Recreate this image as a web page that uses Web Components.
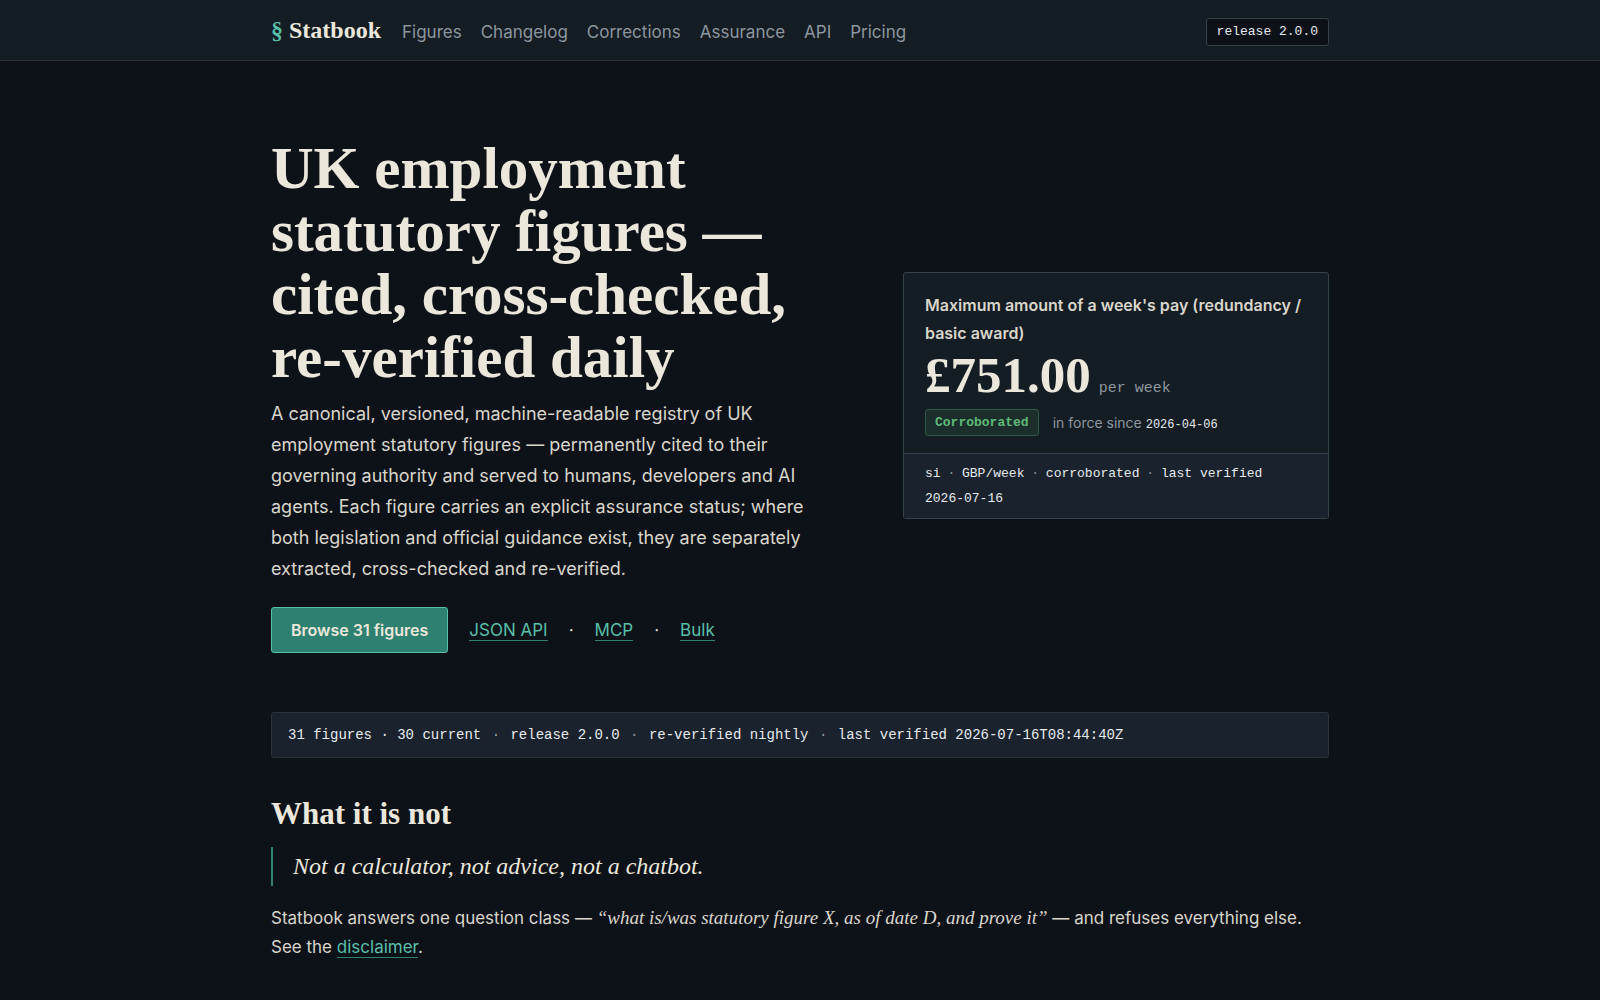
<!DOCTYPE html>
<html lang="en">
<head>
<meta charset="utf-8">
<meta name="viewport" content="width=device-width, initial-scale=1">
<title>Statbook</title>
<style>
:root {
  --bg: #0d1219; --panel: #141c24; --raised: #1a232d; --line: #28333b; --line-strong: #36424a;
  --ink: #ece7db; --body: #d9d6cb; --mono-ink: #e6eaee; --muted: #8d979f;
  --accent: #58bfa8; --accent-fill: #2e8070; --ok: #5fba77;
  --serif: "Liberation Serif", serif; --sans: Inter, sans-serif; --mono: "Liberation Mono", monospace;
}
body { margin: 0; background: var(--bg); color: var(--body); font: 17px/29px var(--sans); }
</style>
</head>
<body>
<sb-header></sb-header>
<sb-page>
  <sb-hero>
    <sb-figure-card slot="card" name="Maximum amount of a week's pay (redundancy / basic award)" value="£751.00" unit="per week" status="Corroborated" since="2026-04-06"></sb-figure-card>
  </sb-hero>
  <sb-stats></sb-stats>
  <sb-scope></sb-scope>
</sb-page>
<script>
const define = (name, html) => customElements.define(name, class extends HTMLElement {
  constructor() {
    super();
    this.attachShadow({ mode: "open" }).innerHTML = html;
  }
  connectedCallback() {
    for (const el of this.shadowRoot.querySelectorAll("[data-attr]"))
      el.textContent = this.getAttribute(el.dataset.attr);
  }
});

define("sb-link", `
<style>
:host { display: inline; }
a { color: var(--accent); text-decoration: none; border-bottom: 1px solid var(--accent-fill); }
</style><a href="#"><slot></slot></a>`);

define("sb-header", `
<style>
:host { display: block; background: var(--panel); border-bottom: 1px solid var(--line); }
.bar { max-width: 1058px; margin: 0 auto; padding: 16px 0 12px; display: flex; align-items: center; gap: 21px; }
a { text-decoration: none; color: var(--muted); }
.brand { font: bold 24px/32px var(--serif); color: var(--ink); padding-bottom: 2px; margin-top: -2px; }
.brand span { color: var(--accent); }
nav { display: flex; gap: 19px; font-size: 17px; line-height: 30px; }
.release { margin-left: auto; padding: 0 10px; font: 13px/26px var(--mono); color: var(--mono-ink);
  background: #0b1117; border: 1px solid var(--line-strong); border-radius: 3px; }
</style>
<header class="bar">
  <a class="brand" href="#"><span>§</span> Statbook</a>
  <nav><a href="#">Figures</a><a href="#">Changelog</a><a href="#">Corrections</a><a href="#">Assurance</a><a href="#">API</a><a href="#">Pricing</a></nav>
  <span class="release">release 2.0.0</span>
</header>`);

define("sb-page", `
<style>:host { display: block; max-width: 1058px; margin: 0 auto; padding: 76px 0 40px; }</style>
<slot></slot>`);

define("sb-hero", `
<style>
:host { display: grid; grid-template-columns: 4fr 3fr; gap: 64px; align-items: center; }
h1 { margin: 0 0 9px; font: bold 59px/63px var(--serif); color: var(--ink); }
p { margin: 0 0 23px; font-size: 18px; line-height: 31px; max-width: 552px; }
.actions { display: flex; align-items: center; gap: 21px; font-size: 17px; }
button { font: 600 16px/26px var(--sans); color: var(--ink); background: var(--accent-fill);
  border: 1px solid var(--accent); border-radius: 3px; padding: 9px 19px; margin: 0; }
</style>
<div>
  <h1>UK employment statutory figures — cited, cross-checked, re-verified daily</h1>
  <p>A canonical, versioned, machine-readable registry of UK employment statutory figures — permanently cited to their governing authority and served to humans, developers and AI agents. Each figure carries an explicit assurance status; where both legislation and official guidance exist, they are separately extracted, cross-checked and re-verified.</p>
  <div class="actions">
    <button type="button">Browse 31 figures</button>
    <sb-link>JSON API</sb-link><span>·</span><sb-link>MCP</sb-link><span>·</span><sb-link>Bulk</sb-link>
  </div>
</div>
<slot name="card"></slot>`);

define("sb-figure-card", `
<style>
:host { display: block; background: var(--panel); border: 1px solid var(--line-strong); border-radius: 3px; }
.main { padding: 18px 21px 16px; }
h2 { margin: 0; font: 600 16px/28px var(--sans); }
.value { display: flex; align-items: baseline; gap: 8px; margin: 1px 0 7px; }
.value strong { font: bold 51px/54px var(--serif); color: var(--ink); }
.value span { font: 15px/26px var(--mono); color: var(--muted); }
.status { display: flex; align-items: center; gap: 14px; font-size: 14px; line-height: 27px; color: var(--muted); }
.badge { font: bold 13px/25px var(--mono); color: var(--ok); background: #1b2e2c; border: 1px solid #2e5a46;
  border-radius: 3px; padding: 0 9px; }
time { font: 12px/24px var(--mono); color: var(--mono-ink); }
footer { border-top: 1px solid var(--line-strong); background: var(--raised); color: var(--mono-ink);
  padding: 7px 21px; font: 13px/25px var(--mono); }
i { font-style: normal; color: var(--muted); margin: 0 -1px; }
</style>
<div class="main">
  <h2 data-attr="name"></h2>
  <div class="value"><strong data-attr="value"></strong><span data-attr="unit"></span></div>
  <div class="status"><span class="badge" data-attr="status"></span><span>in force since <time data-attr="since"></time></span></div>
</div>
<footer>si <i>·</i> GBP/week <i>·</i> corroborated <i>·</i> last verified 2026-07-16</footer>`);

define("sb-stats", `
<style>
:host { display: block; margin-top: 59px; padding: 9px 16px; background: var(--raised); color: var(--mono-ink);
  border: 1px solid var(--line); border-radius: 3px; font: 14px/26px var(--mono); }
i { font-style: normal; color: var(--muted); margin: 0 2px; }
</style>31 figures · 30 current <i>·</i> release 2.0.0 <i>·</i> re-verified nightly <i>·</i> last verified 2026-07-16T08:44:40Z`);

define("sb-scope", `
<style>
:host { display: block; }
h2 { margin: 38px 0 15px; font: bold 31px/36px var(--serif); color: var(--ink); }
blockquote { margin: 0 0 18px; padding: 0 20px; border-left: 2px solid var(--accent-fill);
  font: italic 24px/39px var(--serif); color: var(--ink); }
p { margin: 0; }
em { font: italic 19px/26px var(--serif); }
</style>
<h2>What it is not</h2>
<blockquote>Not a calculator, not advice, not a chatbot.</blockquote>
<p>Statbook answers one question class — <em>“what is/was statutory figure X, as of date D, and prove it”</em> — and refuses everything else. See the <sb-link>disclaimer</sb-link>.</p>`);
</script>
</body>
</html>
